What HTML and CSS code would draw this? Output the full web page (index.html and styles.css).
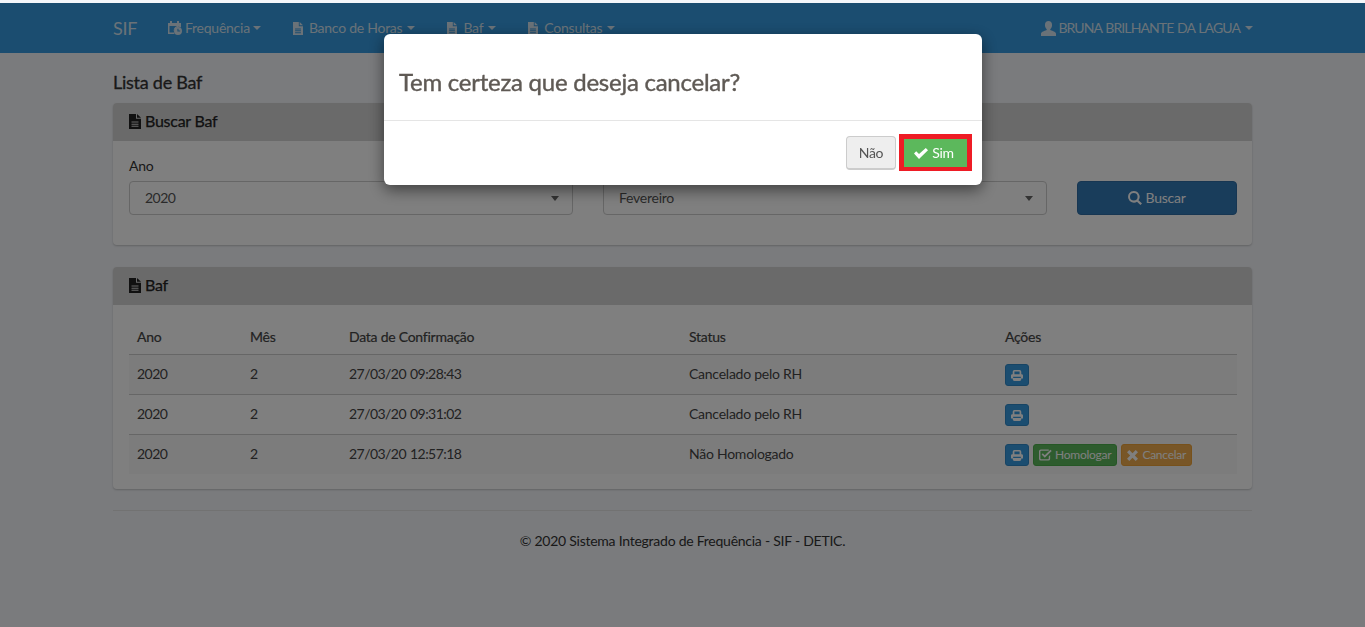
FILE: index.html
```html
<!DOCTYPE html>
<html lang="pt">
<head>
<meta charset="utf-8">
<title>SIF</title>
<link rel="stylesheet" href="styles.css">
</head>
<body>
<svg class="defs" width="0" height="0" aria-hidden="true">
  <symbol id="i-file" viewBox="0 0 12 14" preserveAspectRatio="none"><path fill-rule="evenodd" d="M0 0h7v4.500h5V14H0zM8 0l4 3.600H8zM2.500 7v1h7V7zm0 2v1h7V9zm0 2v1h7v-1z"/></symbol>
  <symbol id="i-cal" viewBox="0 0 14 14"><path fill-rule="evenodd" d="M0 2h2V0h2v2h5V0h2v2h2v4.500a4.800 4.800 0 0 0-6.500 6.500H0zM1.500 5v6.500h4.500A5 5 0 0 1 9 5z"/><path fill-rule="evenodd" d="M10 6a4 4 0 1 1 0 8 4 4 0 0 1 0-8zm-.6 1.800v2.700h2.800v-1h-1.700V7.800z"/></symbol>
  <symbol id="i-print" viewBox="0 0 14 13"><path fill-rule="evenodd" d="M4 0h6a2 2 0 0 1 2 2v3h.5A1.500 1.500 0 0 1 14 6.500V10h-2v1a2 2 0 0 1-2 2H4a2 2 0 0 1-2-2v-1H0V6.500A1.500 1.500 0 0 1 1.500 5H2V2a2 2 0 0 1 2-2zM4 1.700V5h6V1.700zM2.500 8v1.400h9V8z"/></symbol>
  <symbol id="i-user" viewBox="0 0 16 16"><path d="M8 0c2.300 0 3.800 1.700 3.800 4.200 0 1.700-.7 3.300-1.700 4.200-.4.400-.3 1.200.3 1.500 2 .9 5.600 1.500 5.600 3.600V16H0v-2.500c0-2.100 3.600-2.700 5.600-3.600.6-.3.700-1.100.3-1.500-1-.9-1.700-2.500-1.700-4.200C4.200 1.700 5.700 0 8 0z"/></symbol>
  <symbol id="i-search" viewBox="0 0 14 14"><path fill-rule="evenodd" d="M5.800 0a5.800 5.800 0 0 1 4.700 9.200l3.500 3.200-1.600 1.600-3.400-3.300A5.800 5.800 0 1 1 5.800 0zm0 2a3.800 3.800 0 1 0 0 7.600 3.800 3.800 0 0 0 0-7.600z"/></symbol>
  <symbol id="i-check" viewBox="0 0 14 11"><path d="M0 5.500 2.200 3.300 5 6.100 11.800 0 14 2.200 5 11z"/></symbol>
  <symbol id="i-checkbox" viewBox="0 0 14 12"><path d="M2 0h8.500v1.500H2.200a.7.700 0 0 0-.7.700v7.600c0 .4.300.7.700.7h7.600a.7.700 0 0 0 .7-.7V7.500L12 6v4a2 2 0 0 1-2 2H2a2 2 0 0 1-2-2V2a2 2 0 0 1 2-2z"/><path d="M2.800 5.500 4.100 4.200 6.200 6.300 12.300 .4 13.700 1.700 6.200 9z"/></symbol>
  <symbol id="i-x" viewBox="0 0 11 11"><path d="M0 2.300 2.300 0l3.200 3.200L8.700 0 11 2.300 7.800 5.500 11 8.700 8.700 11 5.500 7.800 2.300 11 0 8.700l3.200-3.200z"/></symbol>
</svg>

<header class="navbar">
  <div class="nav-inner">
    <a class="brand">SIF</a>
    <nav class="menu">
      <a class="menu-item"><svg class="ico"><use href="#i-cal"/></svg>Frequência<span class="caret tight"></span></a>
      <a class="menu-item"><svg class="ico ico-file"><use href="#i-file"/></svg>Banco de Horas<span class="caret"></span></a>
      <a class="menu-item"><svg class="ico ico-file"><use href="#i-file"/></svg>Baf<span class="caret"></span></a>
      <a class="menu-item"><svg class="ico ico-file"><use href="#i-file"/></svg>Consultas<span class="caret"></span></a>
    </nav>
    <a class="menu-item user"><svg class="ico ico-user"><use href="#i-user"/></svg>BRUNA BRILHANTE DA LAGUA<span class="caret"></span></a>
  </div>
</header>

<main class="page">
  <h1 class="page-title">Lista de Baf</h1>

  <section class="panel panel-search">
    <h2 class="panel-head"><svg class="ico-head"><use href="#i-file"/></svg>Buscar Baf</h2>
    <form class="search-form">
      <div class="field">
        <label class="field-label">Ano</label>
        <div class="select"><span class="num">2020</span><span class="select-arrow"></span></div>
      </div>
      <div class="field">
        <label class="field-label">Mês</label>
        <div class="select">Fevereiro<span class="select-arrow"></span></div>
      </div>
      <button type="button" class="btn-search"><svg class="ico-search"><use href="#i-search"/></svg>Buscar</button>
    </form>
  </section>

  <section class="panel panel-table">
    <h2 class="panel-head"><svg class="ico-head"><use href="#i-file"/></svg>Baf</h2>
    <div class="table-wrap">
      <table class="table">
        <thead>
          <tr><th class="c1">Ano</th><th class="c2">Mês</th><th class="c3">Data de Confirmação</th><th class="c4">Status</th><th>Ações</th></tr>
        </thead>
        <tbody>
          <tr><td class="num">2020</td><td>2</td><td class="num">27/03/20 09:28:43</td><td>Cancelado pelo RH</td><td><span class="actions"><a class="xs print"><svg class="ico-print"><use href="#i-print"/></svg></a></span></td></tr>
          <tr><td class="num">2020</td><td>2</td><td class="num">27/03/20 09:31:02</td><td>Cancelado pelo RH</td><td><span class="actions"><a class="xs print"><svg class="ico-print"><use href="#i-print"/></svg></a></span></td></tr>
          <tr><td class="num">2020</td><td>2</td><td class="num">27/03/20 12:57:18</td><td>Não Homologado</td><td><span class="actions"><a class="xs print"><svg class="ico-print"><use href="#i-print"/></svg></a><a class="xs ok"><svg class="ico-xs"><use href="#i-checkbox"/></svg>Homologar</a><a class="xs warn"><svg class="ico-x"><use href="#i-x"/></svg>Cancelar</a></span></td></tr>
        </tbody>
      </table>
    </div>
  </section>

  <footer class="footer">© 2020 Sistema Integrado de Frequência - SIF - DETIC.</footer>
</main>

<div class="backdrop"></div>
<div class="modal" role="dialog">
  <div class="modal-body"><h3 class="modal-title">Tem certeza que deseja cancelar?</h3></div>
  <div class="modal-foot">
    <button type="button" class="btn-no">Não</button>
    <span class="highlight"><button type="button" class="btn-yes"><svg class="ico-check"><use href="#i-check"/></svg>Sim</button></span>
  </div>
</div>
</body>
</html>
```

FILE: styles.css
```css
* { box-sizing: border-box; }
html, body { height: 100%; }
body { margin: 0; padding-top: 3px; background: #f4f6fa; color: #333; font: 14px/20px Lato, "Noto Sans", sans-serif; letter-spacing: -.25px; overflow: hidden; }
.defs { position: absolute; }
svg { fill: currentColor; }
.num { letter-spacing: -.55px; word-spacing: 1px; }

.navbar { height: 50px; background: #369ae0; color: #d4e4f0; }
.nav-inner { width: 1139px; margin: 0 auto; height: 100%; display: flex; align-items: center; }
.brand { font-size: 18px; width: 55px; }
.menu { display: flex; flex: 1; gap: 32px; }
.menu-item { display: flex; align-items: center; white-space: nowrap; }
.ico { width: 14px; height: 14px; margin-right: 3px; }
.ico-file { width: 10px; height: 13px; margin-right: 6px; }
.ico-user { width: 15px; height: 15px; margin-right: 2px; }
.caret { width: 0; height: 0; margin-left: 5px; border-top: 4px solid currentColor; border-left: 4px solid transparent; border-right: 4px solid transparent; }
.caret.tight { margin-left: 3px; }
.user { margin-right: -1px; letter-spacing: -.9px; word-spacing: 1px; }

.page { width: 1139px; margin: 0 auto; }
.page-title { margin: 0; padding-top: 19px; height: 50px; font-size: 18px; line-height: 20px; font-weight: 400; -webkit-text-stroke: .3px currentColor; }
.panel { background: #fff; border-radius: 4px; box-shadow: 0 1px 2px rgba(0,0,0,.2); }
.panel-search { height: 142px; }
.panel-table { height: 222px; margin-top: 22px; }
.panel-head { margin: 0; height: 38px; padding: 7px 16px 9px; display: flex; align-items: center; background: #d4d4d4; border-radius: 4px 4px 0 0; font-size: 16px; line-height: 20px; font-weight: 400; color: #222; -webkit-text-stroke: .25px currentColor; }
.ico-head { width: 12px; height: 15px; margin-right: 4px; }

.search-form { display: flex; padding: 15px 15px 15px 16px; gap: 30px; align-items: flex-end; }
.field { width: 444px; }
.field-label { display: block; height: 25px; line-height: 20px; }
.select { position: relative; height: 34px; line-height: 32px; padding-left: 15px; border: 1px solid #ccc; border-radius: 4px; background: #fff; color: #555; }
.select-arrow { position: absolute; right: 13px; top: 14px; border-top: 5px solid #666; border-left: 4px solid transparent; border-right: 4px solid transparent; }
.btn-search { width: 160px; height: 34px; display: flex; align-items: center; justify-content: center; border: 1px solid #2e6da4; border-radius: 4px; background: #337ab7; color: #fff; font: inherit; letter-spacing: inherit; }
.ico-search { width: 14px; height: 14px; margin-right: 3px; }

.table-wrap { padding: 13px 15px 15px 16px; }
.table { width: 100%; border-collapse: collapse; table-layout: fixed; }
.table th { height: 36px; padding: 0 8px 7px; vertical-align: bottom; text-align: left; font-weight: 400; border-bottom: 1px solid #ccc; color: #444; -webkit-text-stroke: .2px currentColor; }
.table td { height: 40px; padding: 0 8px; border-bottom: 1px solid #ccc; color: #444; }
.table tbody tr:nth-child(odd) td { background: #f9f9f9; }
.table tbody tr:last-child td { border-bottom: 0; }
.c1 { width: 113px; }
.c2 { width: 99px; }
.c3 { width: 340px; }
.c4 { width: 316px; }
.actions { display: flex; gap: 4px; padding-top: 2px; }
.xs { display: flex; align-items: center; height: 22px; padding: 0 5px; border: 1px solid; border-radius: 3px; font-size: 12px; color: #fff; }
.print { width: 24px; justify-content: center; background: #369ae0; border-color: #2e88c8; }
.ok { background: #5cb85c; border-color: #4cae4c; }
.warn { background: #f0ad4e; border-color: #eea236; }
.ico-print { width: 14px; height: 13px; }
.ico-xs { width: 13px; height: 12px; margin-right: 3px; }
.ico-x { width: 11px; height: 11px; margin-right: 4px; }

.footer { margin-top: 21px; padding-top: 20px; border-top: 1px solid #e5e5e5; text-align: center; color: #333; }

.backdrop { position: fixed; inset: 3px 0 0 0; background: rgba(0,0,0,.5); }
.modal { position: fixed; left: 384px; top: 34px; width: 598px; height: 151px; background: #fff; border-radius: 6px; box-shadow: 0 5px 15px rgba(0,0,0,.5); }
.modal-body { height: 87px; padding: 33px 15px 0; border-bottom: 1px solid #e5e5e5; }
.modal-title { margin: 0; font-size: 24px; line-height: 30px; font-weight: 400; color: #5f5a55; -webkit-text-stroke: .4px currentColor; }
.modal-foot { display: flex; justify-content: flex-end; align-items: flex-start; gap: 3px; padding: 13px 10px 0 0; }
.btn-no { width: 50px; height: 34px; margin-top: 2px; border: 1px solid #ccc; border-bottom-width: 2px; border-radius: 4px; background: #eee; color: #555; font: inherit; letter-spacing: inherit; }
.highlight { display: block; border: 5px solid #ee1c25; border-bottom-width: 4px; }
.btn-yes { display: flex; align-items: center; justify-content: center; width: 63px; height: 28px; padding: 0 3px 0 0; border: 0; background: #5cb85c; color: #fff; font: inherit; letter-spacing: inherit; }
.ico-check { width: 14px; height: 11px; margin-right: 4px; }
```
